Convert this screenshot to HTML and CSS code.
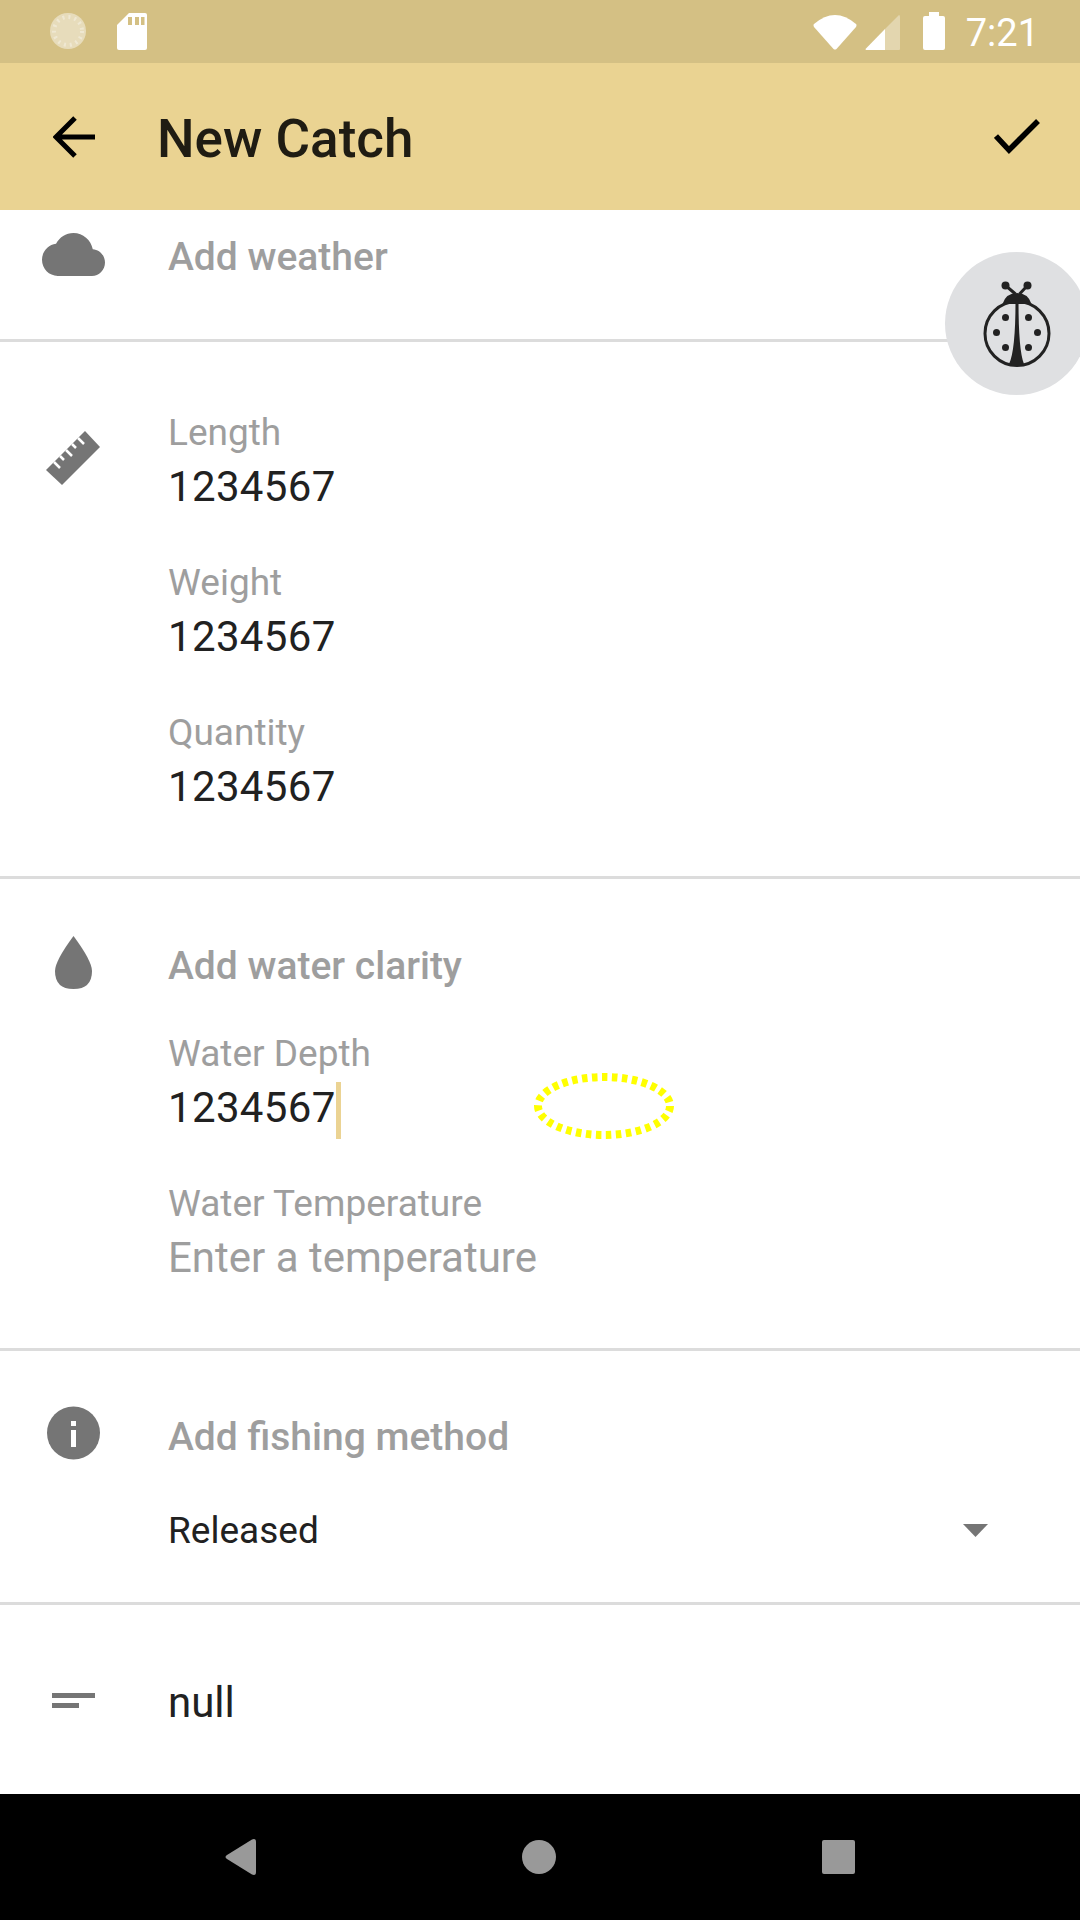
FILE: index.html
```html
<!DOCTYPE html>
<html lang="en">
<head>
   <meta charset="utf-8">
   <meta content="width=device-width, initial-scale=1.0" name="viewport">
   <title>New Catch</title>
   <link rel="stylesheet" href="styles.css">
</head>
<body>
   <div class="screen">
      <div class="status-bar">
         <svg class="st-sync" width="37" height="37" viewBox="0 0 37 37">
            <circle cx="18" cy="18" r="18" fill="#fff" opacity="0.45"/>
            <path d="M32 7A18 18 0 0 1 8 33A18 18 0 0 0 32 7Z" fill="#fff"/>
            <circle cx="18" cy="18" r="14" fill="none" stroke="#fff" stroke-opacity="0.35" stroke-width="4" stroke-dasharray="2 4"/>
         </svg>
         <svg class="st-sd" width="30" height="37" viewBox="0 0 30 37">
            <path d="M12 0H28Q30 0 30 2V35Q30 37 28 37H2Q0 37 0 35V12Z" fill="#fff"/>
            <path d="M11 4h4v8h-4zM18 4h4v8h-4zM24 4h3.500v8H24z" fill="#d4c084"/>
         </svg>
         <svg class="st-wifi" width="44" height="37" viewBox="0 0 44 37">
            <path d="M1 11Q22 -7 43 11Q44 12 43 14L23.500 36Q22 37 20.500 36L1 14Q0 12 1 11Z" fill="#fff"/>
         </svg>
         <svg class="st-signal" width="35" height="35" viewBox="0 0 35 35">
            <path d="M34 0Q35 0 35 2V34Q35 35 34 35H20V14Z" fill="#fff" opacity="0.35"/>
            <path d="M20 14V35H1Q0 35 1 33.500Z" fill="#fff"/>
         </svg>
         <svg class="st-battery" width="22" height="38" viewBox="0 0 22 38">
            <path d="M6 0H16V4H20Q22 4 22 6V36Q22 38 20 38H2Q0 38 0 36V6Q0 4 2 4H6Z" fill="#fff"/>
         </svg>
         <span class="st-time">7:21</span>
      </div>

      <div class="toolbar">
         <svg class="tb-back" width="42" height="42" viewBox="0 0 42 42">
            <path d="M42 21H3M22 2L3 21L22 40" fill="none" stroke="#000" stroke-width="5"/>
         </svg>
         <h1 class="tb-title">New Catch</h1>
         <svg class="tb-check" width="46" height="36" viewBox="0 0 46 36">
            <path d="M2 17L15 31L44 2" fill="none" stroke="#000" stroke-width="5.500"/>
         </svg>
      </div>

      <div class="content">
         <div class="section sec-weather">
            <div class="row">
               <svg class="icon" viewBox="0 0 72 72">
                  <path transform="translate(5 2.200) scale(2.625 2.690)" d="M19.350 10.040C18.670 6.590 15.640 4 12 4 9.110 4 6.600 5.640 5.350 8.040 2.340 8.360 0 10.910 0 14c0 3.310 2.690 6 6 6h13c2.760 0 5-2.240 5-5 0-2.640-2.050-4.780-4.650-4.960z" fill="#757575"/>
               </svg>
               <div class="row-head">Add weather</div>
            </div>
         </div>

         <div class="section sec-size">
            <svg class="icon icon-ruler" viewBox="0 0 72 72">
               <path d="M9 48L48 9L63 25L25 63Z" fill="#757575"/>
               <path d="M17 40l6 6M23 34l4 4M29 28l6 6M35 22l4 4M41 16l6 6" stroke="#fff" stroke-width="2.500" fill="none"/>
            </svg>
            <div class="fields">
               <div class="field">
                  <div class="label">Length</div>
                  <div class="value num">1234567</div>
               </div>
               <div class="field">
                  <div class="label">Weight</div>
                  <div class="value num">1234567</div>
               </div>
               <div class="field">
                  <div class="label">Quantity</div>
                  <div class="value num">1234567</div>
               </div>
            </div>
         </div>

         <div class="section sec-water">
            <div class="row">
               <svg class="icon" viewBox="0 0 72 72">
                  <path d="M36.500 7Q55 32 55 42Q55 60 36.500 60Q18 60 18 42Q18 32 36.500 7Z" fill="#757575"/>
               </svg>
               <div class="row-head">Add water clarity</div>
            </div>
            <div class="fields fields-sub">
               <div class="field">
                  <div class="label">Water Depth</div>
                  <div class="value num">1234567<span class="cursor"></span></div>
               </div>
               <div class="field">
                  <div class="label">Water Temperature</div>
                  <div class="value hint">Enter a temperature</div>
               </div>
            </div>
         </div>

         <div class="section sec-method">
            <div class="row">
               <svg class="icon" viewBox="0 0 72 72">
                  <circle cx="36.500" cy="33" r="26.500" fill="#757575"/>
                  <path d="M34 21h5v5h-5zM34 30h5v17h-5z" fill="#fff"/>
               </svg>
               <div class="row-head">Add fishing method</div>
            </div>
            <div class="select">
               <span class="select-text">Released</span>
               <svg width="25" height="13" viewBox="0 0 25 13"><path d="M0 0H25L12.500 13Z" fill="#757575"/></svg>
            </div>
         </div>

         <div class="section sec-notes">
            <div class="row">
               <svg class="icon" viewBox="0 0 72 72">
                  <path d="M15 27h43v5H15zM15 37h27v5H15z" fill="#757575"/>
               </svg>
               <div class="value">null</div>
            </div>
         </div>

         <!-- debug button and touch marker float over the form -->
         <div class="fab">
            <svg width="68" height="86" viewBox="0 0 68 86">
               <path d="M22.500 4.500L32.500 13M44.500 4.500L36.500 13" fill="none" stroke="#222" stroke-width="3"/>
               <circle cx="22.500" cy="4.500" r="4" fill="#222"/>
               <circle cx="44.500" cy="4.500" r="4" fill="#222"/>
               <path d="M19.500 23Q23 12 34 12Q45 12 48.500 23Z" fill="#222"/>
               <circle cx="34" cy="52.500" r="32" fill="none" stroke="#222" stroke-width="3"/>
               <path d="M32.500 20H35.500Q35.500 70 41 83Q33.500 87 26 83Q32.500 70 32.500 20Z" fill="#222"/>
               <g fill="#222">
                  <circle cx="22.500" cy="36.500" r="3.500"/>
                  <circle cx="45.500" cy="36.500" r="3.500"/>
                  <circle cx="13.500" cy="51.500" r="3.500"/>
                  <circle cx="54.500" cy="51.500" r="3.500"/>
                  <circle cx="22.500" cy="66.500" r="3.500"/>
                  <circle cx="45.500" cy="66.500" r="3.500"/>
               </g>
            </svg>
         </div>
         <svg class="touch-mark" width="140" height="66" viewBox="0 0 140 66">
            <ellipse cx="70" cy="33" rx="66" ry="29" fill="none" stroke="#ffff00" stroke-width="8" stroke-dasharray="5.500 4.500"/>
         </svg>
      </div>

      <div class="nav-bar">
         <svg width="31" height="36" viewBox="0 0 31 36">
            <path d="M27 0.500Q31 -1 31 3V33Q31 37 27 35.500L2 20Q-1 18 2 16Z" fill="#999"/>
         </svg>
         <svg width="34" height="34" viewBox="0 0 34 34"><circle cx="17" cy="17" r="17" fill="#999"/></svg>
         <svg width="33" height="34" viewBox="0 0 33 34"><rect width="33" height="34" rx="2" fill="#999"/></svg>
      </div>
   </div>
</body>
</html>
```

FILE: styles.css
```css
* {
    margin: 0;
    padding: 0;
    box-sizing: border-box;
}
body {
    background: #fff;
    font-family: Roboto, "Liberation Sans", sans-serif;
}
.screen {
    width: 1080px;
    height: 1920px;
    display: flex;
    flex-direction: column;
    overflow: hidden;
}

/* status bar */
.status-bar {
    height: 63px;
    background: #d4c084;
    display: flex;
    align-items: flex-start;
    padding-top: 13px;
    flex-shrink: 0;
}
.st-sync {
    margin-left: 50px;
}
.st-sd {
    margin-left: 30px;
}
.st-wifi {
    margin-left: auto;
}
.st-signal {
    margin-left: 8px;
    margin-top: 2px;
}
.st-battery {
    margin-left: 23px;
    margin-top: -1px;
}
.st-time {
    margin-left: 21px;
    margin-right: 41px;
    color: #fff;
    font-size: 38px;
    line-height: 40px;
}

/* toolbar */
.toolbar {
    height: 147px;
    background: #ead392;
    display: flex;
    align-items: center;
    flex-shrink: 0;
}
.tb-back {
    margin-left: 53px;
}
.tb-title {
    margin-left: 62px;
    padding-top: 5px;
    font-size: 53px;
    font-weight: 500;
    color: #1f1c13;
}
.tb-check {
    margin-left: auto;
    margin-right: 40px;
}

/* form */
.content {
    position: relative;
    flex: 1;
    overflow: hidden;
}
.section {
    border-bottom: 3px solid #dcdcdc;
}
.sec-weather {
    height: 132px;
    padding-top: 10px;
}
.sec-size {
    display: flex;
    padding: 63px 0;
}
.sec-water {
    padding: 50px 0 64px;
}
.sec-method {
    padding: 49px 0 45px;
}
.sec-notes {
    border-bottom: 0;
    padding-top: 61px;
}
.row {
    display: flex;
    align-items: center;
    height: 72px;
}
.icon {
    width: 72px;
    height: 72px;
    margin-left: 37px;
    margin-right: 59px;
    flex-shrink: 0;
}
.icon-ruler {
    margin-top: 17px;
}
.row-head {
    padding-top: 1px;
    font-size: 39px;
    font-weight: 500;
    color: #9e9e9e;
}
.fields {
    display: flex;
    flex-direction: column;
    gap: 42px;
}
.fields-sub {
    margin: 25px 0 0 168px;
}
.label {
    height: 54px;
    font-size: 37px;
    line-height: 56px;
    color: #9e9e9e;
}
.value {
    height: 54px;
    font-size: 42px;
    line-height: 56px;
    color: #212121;
}
.num {
    letter-spacing: 0.35px;
}
.hint {
    color: #9e9e9e;
}
.cursor {
    display: inline-block;
    width: 5px;
    height: 57px;
    margin: -2px 0 -2px 0;
    vertical-align: middle;
    background: #ebd393;
}
.select {
    display: flex;
    justify-content: space-between;
    align-items: center;
    margin-top: 31px;
    padding: 0 92px 0 168px;
    height: 54px;
}
.select-text {
    font-size: 37px;
    color: #212121;
}
.fab {
    position: absolute;
    left: 945px;
    top: 42px;
    width: 143px;
    height: 143px;
    border-radius: 50%;
    background: #dfe0e2;
    display: flex;
    align-items: center;
    justify-content: center;
}
.touch-mark {
    position: absolute;
    left: 534px;
    top: 863px;
}

/* nav */
.nav-bar {
    height: 126px;
    background: #000;
    display: flex;
    justify-content: space-between;
    align-items: center;
    padding: 0 225px;
    flex-shrink: 0;
}
```
